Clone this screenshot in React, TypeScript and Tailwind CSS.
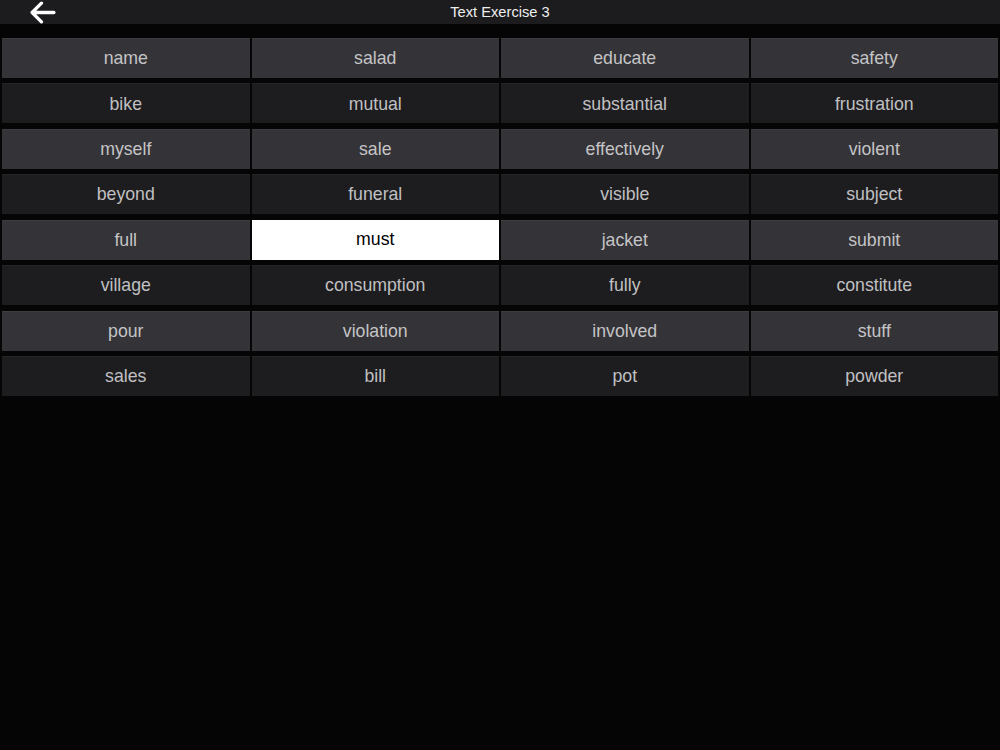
import { useState } from "react";

const words = [
  "name", "salad", "educate", "safety",
  "bike", "mutual", "substantial", "frustration",
  "myself", "sale", "effectively", "violent",
  "beyond", "funeral", "visible", "subject",
  "full", "must", "jacket", "submit",
  "village", "consumption", "fully", "constitute",
  "pour", "violation", "involved", "stuff",
  "sales", "bill", "pot", "powder",
];

export default function App() {
  const [selected, setSelected] = useState("must");

  return (
    <div
      className="h-[750px] w-[1000px] overflow-hidden bg-[#050505]"
      style={{ fontFamily: '"Liberation Sans", Arial, sans-serif' }}
    >
      <header className="relative flex h-[24px] items-center justify-center bg-[#1c1b1e]">
        <button className="absolute left-[28px] top-0 flex h-[24px] w-[28px] items-center justify-center">
          <svg width="27" height="23" viewBox="0 0 26 22" fill="none">
            <path d="M24 11H3M12 2L3 11l9 9" stroke="#fff" strokeWidth="3.2" strokeLinecap="round" strokeLinejoin="round" />
          </svg>
        </button>
        <h1 className="text-[14.7px] text-[#eeeeee]">Text Exercise 3</h1>
      </header>

      <div className="mt-[14px] grid grid-cols-4 gap-x-[2px] gap-y-[5.43px] px-[2px]">
        {words.map((w, i) => {
          const row = Math.floor(i / 4);
          const isSel = w === selected;
          return (
            <button
              key={w}
              onClick={() => setSelected(w)}
              className={`flex h-[40px] items-center justify-center text-[17.7px] ${
                isSel
                  ? "bg-white text-black"
                  : row % 2 === 0
                  ? "border-t border-[#3d3c41] bg-[#343337] text-[#c4c4c6]"
                  : "border-t border-[#252428] bg-[#1d1c1f] text-[#c0c0c2]"
              }`}
            >
              {w}
            </button>
          );
        })}
      </div>
    </div>
  );
}
